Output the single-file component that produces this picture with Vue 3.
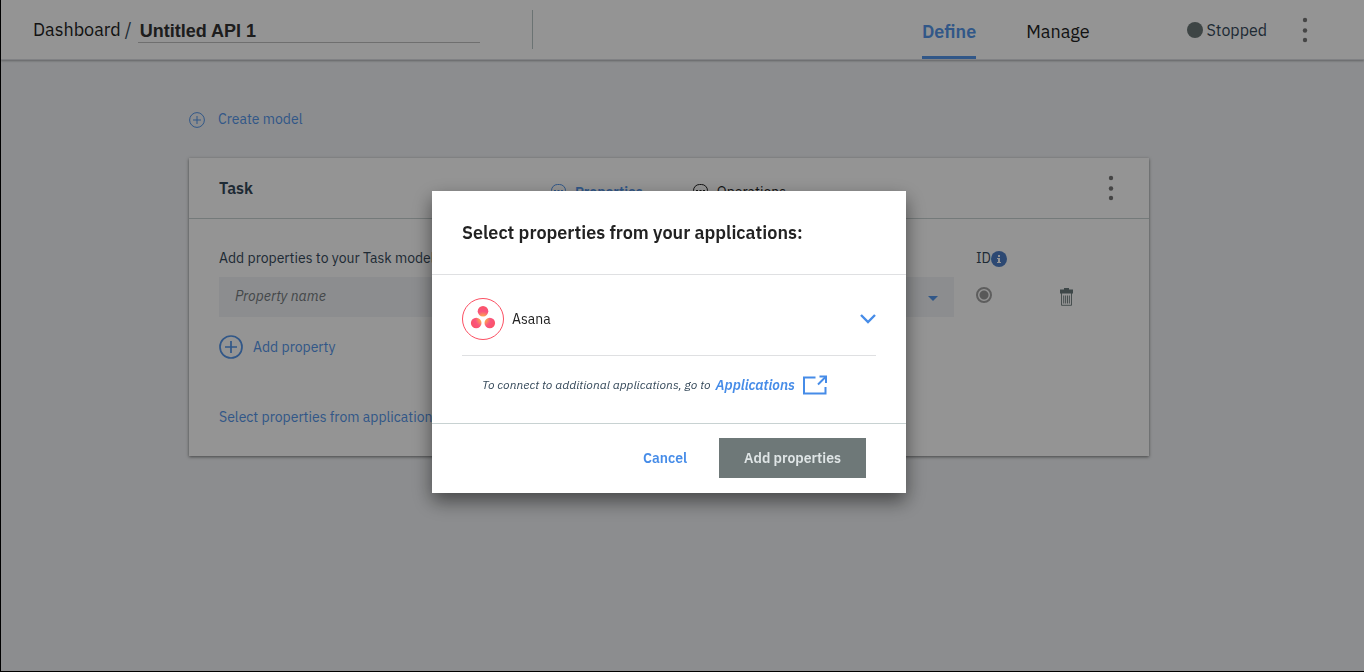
<script setup>
import { ref } from 'vue'

const apiName = ref('Untitled API 1')
const propertyName = ref('')
const propertyType = ref('string')
const tabs = [
  { label: 'Define', active: true },
  { label: 'Manage', active: false },
]
const sections = [
  { label: 'Properties', active: true },
  { label: 'Operations', active: false },
]
</script>

<template>
  <div class="app">
    <header class="topbar">
      <nav class="crumbs" aria-label="Breadcrumb">
        <a href="#" class="crumb">Dashboard</a>
        <span class="slash">/</span>
        <input v-model="apiName" class="api-name" aria-label="API name" />
      </nav>
      <nav class="tabs" aria-label="API sections">
        <a v-for="t in tabs" :key="t.label" href="#" class="tab" :class="{ active: t.active }">{{ t.label }}</a>
      </nav>
      <div class="status"><span class="dot"></span>Stopped</div>
      <button class="kebab" aria-label="API options">
        <svg width="6" height="26" viewBox="0 0 6 26"><circle cx="3" cy="3" r="2.2" /><circle cx="3" cy="13.500" r="2.2" /><circle cx="3" cy="23" r="2.2" /></svg>
      </button>
    </header>

    <main class="content">
      <button class="link create">
        <svg width="16" height="18" viewBox="0 0 16 18"><circle cx="8" cy="10" r="7.400" /><path d="M8 6v8M4 10h8" /></svg>
        Create model
      </button>

      <section class="card">
        <div class="card-head">
          <h2>Task</h2>
          <div class="sections">
            <button v-for="s in sections" :key="s.label" class="section" :class="{ active: s.active }">
              <svg width="15" height="17" viewBox="0 0 15 17"><rect x=".5" y=".5" width="14" height="14" rx="6" /><path d="M3 7.500h2M6.500 7.500h2M10 7.500h2" stroke-width="3" /></svg>
              {{ s.label }}
            </button>
          </div>
          <button class="kebab" aria-label="Model options">
            <svg width="6" height="26" viewBox="0 0 6 26"><circle cx="3" cy="3" r="2.2" /><circle cx="3" cy="13.500" r="2.2" /><circle cx="3" cy="23" r="2.2" /></svg>
          </button>
        </div>
        <div class="card-body">
          <div class="grid">
            <label for="prop-name" class="grid-label">Add properties to your Task model</label>
            <div class="id-label">
              <label for="prop-id">ID</label>
              <svg width="16" height="18" viewBox="0 0 16 18"><circle cx="8" cy="10" r="8" fill="#4f7fc6" /><path d="M7 6h2v2H7zM6 9h3v4h1v1H6v-1h1v-3H6z" fill="#fff" /></svg>
            </div>
            <span></span>
            <div class="fields">
              <input id="prop-name" v-model="propertyName" class="field" placeholder="Property name" />
              <div class="select-wrap">
                <select v-model="propertyType" class="field" aria-label="Property type">
                  <option value="string">String</option>
                </select>
                <svg class="caret" width="10" height="5" viewBox="0 0 10 5"><path d="M0 0h10L5 5z" /></svg>
              </div>
            </div>
            <input id="prop-id" type="radio" class="radio" checked />
            <button class="trash" aria-label="Delete property">
              <svg width="13" height="18" viewBox="0 0 13 18"><path d="M4 0h5v1.500h4V5.500H0v-4h4z" fill="#6b7a7c" /><path d="M1.500 5v12.300h10V5M3.700 7.500v8M5.600 7.500v8M7.500 7.500v8M9.400 7.500v8" fill="none" stroke="#6b7a7c" stroke-width=".9" /></svg>
            </button>
          </div>
          <button class="link add">
            <svg width="24" height="24" viewBox="0 0 24 24"><circle cx="12" cy="12" r="11" /><path d="M12 6v12M6 12h12" /></svg>
            Add property
          </button>
          <button class="link">Select properties from applications</button>
        </div>
      </section>
    </main>

    <div class="overlay">
      <div class="modal" role="dialog" aria-modal="true" aria-labelledby="modal-title">
        <h1 id="modal-title">Select properties from your applications:</h1>
        <div class="modal-body">
          <button class="app-row">
            <svg width="42" height="42" viewBox="0 0 42 42">
              <defs>
                <radialGradient id="petal" gradientUnits="userSpaceOnUse" cx="21" cy="21" r="14">
                  <stop offset="0" stop-color="#ffb43f" />
                  <stop offset=".25" stop-color="#fd9a55" />
                  <stop offset=".55" stop-color="#f9557f" />
                  <stop offset="1" stop-color="#fb5360" />
                </radialGradient>
              </defs>
              <circle cx="21" cy="21" r="20.500" fill="#fff" stroke="#fb4f62" />
              <g fill="url(#petal)"><circle cx="21" cy="13.300" r="5.300" /><circle cx="14.200" cy="25" r="5.300" /><circle cx="27.800" cy="25" r="5.300" /></g>
            </svg>
            <span>Asana</span>
            <svg class="chevron" width="16" height="10" viewBox="0 0 16 10"><path d="M1 1l7 7 7-7" /></svg>
          </button>
          <p class="hint">
            To connect to additional applications, go to
            <a href="#">Applications
              <svg width="24" height="20" viewBox="0 0 24 20"><path d="M12.500 2.500H1v16h21.500V12" /><path d="M15 9.500l7.500-7.500" /><path d="M16.500 1.500H23V8" /></svg>
            </a>
          </p>
        </div>
        <div class="modal-foot">
          <button class="cancel">Cancel</button>
          <button class="submit">Add properties</button>
        </div>
      </div>
    </div>
  </div>
</template>

<style>
body {
  background: #f1f3f6;
}
</style>

<style scoped>
* {
  box-sizing: border-box;
}
.app {
  min-height: 100vh;
  border-left: 1px solid #000;
  border-bottom: 1px solid #000;
  font-family: "IBM Plex Sans", Roboto, "Liberation Sans", sans-serif;
  font-size: 14px;
  line-height: 20px;
  color: #35495a;
}
button {
  border: 0;
  padding: 0;
  background: none;
  font: inherit;
  color: inherit;
  cursor: pointer;
}
a {
  text-decoration: none;
  color: inherit;
}
svg {
  flex: none;
  display: block;
}
.topbar {
  display: flex;
  align-items: center;
  height: 60px;
  padding: 0 56px 0 32px;
  background: #fff;
  border-bottom: 1px solid #dcdfe3;
  box-shadow: 0 1px 2px rgba(0, 0, 0, 0.3);
}
.crumbs {
  display: flex;
  align-items: center;
  gap: 4px;
  height: 39px;
  width: 500px;
  border-right: 1px solid #b8c6c6;
  font-size: 18px;
  color: #222;
}
.slash {
  color: #35495a;
}
.api-name {
  width: 342px;
  height: 26px;
  margin-left: 2px;
  padding: 4px 2px 0;
  border: 0;
  border-bottom: 1px solid #c0c0c0;
  background: none;
  font: bold 18px "Liberation Sans", sans-serif;
  color: #333;
}
.tabs {
  display: flex;
  gap: 50px;
  height: 59px;
  margin-left: auto;
  margin-right: 97px;
  font-size: 18px;
  line-height: 64px;
  color: #222;
}
.tab.active {
  font-weight: 600;
  color: #5596ea;
  border-bottom: 3px solid #5596ea;
}
.status {
  display: flex;
  align-items: center;
  gap: 4px;
  margin-right: 35px;
  font-size: 16px;
}
.dot {
  width: 16px;
  height: 16px;
  border-radius: 50%;
  background: #6b7777;
}
.kebab {
  fill: #777;
}
.content {
  display: flex;
  flex-direction: column;
  align-items: center;
  padding: 49px 27px 40px 0;
}
.link {
  display: flex;
  align-items: center;
  color: #5596ea;
}
.link svg,
.section svg {
  fill: none;
  stroke: currentColor;
}
.create {
  width: 960px;
  max-width: 100%;
  gap: 13px;
}
.card {
  width: 960px;
  max-width: 100%;
  margin-top: 29px;
  background: #fff;
  box-shadow: 0 1px 3px rgba(0, 0, 0, 0.5);
}
.card-head {
  display: flex;
  align-items: center;
  height: 61px;
  padding: 0 35px 0 30px;
  border-bottom: 1px solid #c8d2d2;
}
h2 {
  margin: 0;
  width: 332px;
  font-size: 16px;
  font-weight: 600;
}
.sections {
  display: flex;
  gap: 50px;
  flex: 1;
  padding-top: 8px;
  color: #222;
}
.section {
  display: flex;
  align-items: center;
  gap: 9px;
}
.section.active {
  font-weight: 600;
  color: #5596ea;
}
.card-body {
  padding: 29px 30px;
}
.grid {
  display: grid;
  grid-template-columns: minmax(0, 1fr) 62px 59px;
  column-gap: 22px;
  row-gap: 9px;
}
.id-label {
  display: flex;
  align-items: center;
}
.fields {
  display: grid;
  grid-template-columns: 1fr 1fr;
  gap: 16px;
}
.field {
  width: 100%;
  height: 40px;
  padding: 0 16px 2px;
  border: 0;
  border-radius: 0;
  appearance: none;
  background: #f1f3f6;
  font: inherit;
  color: #35495a;
}
.field::placeholder {
  font-style: italic;
  color: #757b80;
  opacity: 1;
}
.select-wrap {
  position: relative;
}
.caret {
  position: absolute;
  right: 16px;
  top: 19px;
  fill: #5596ea;
}
.radio {
  appearance: none;
  width: 16px;
  height: 16px;
  margin: 10px 0 0;
  border: 2px solid #a2a2a2;
  border-radius: 50%;
  background: radial-gradient(circle, #999 4px, transparent 5px);
}
.trash {
  justify-self: start;
}
.add {
  gap: 10px;
  margin: 18px 0 48px;
}
.add svg {
  stroke-width: 1.700;
}
.overlay {
  position: fixed;
  inset: 0 0 1px 1px;
  display: flex;
  align-items: center;
  justify-content: center;
  padding: 13px 27px 0 0;
  background: rgba(0, 0, 0, 0.42);
}
.modal {
  width: 474px;
  max-width: 100%;
  background: #fff;
  box-shadow: 0 8px 18px rgba(0, 0, 0, 0.5);
}
h1 {
  margin: 0;
  padding: 30px 30px 29px;
  border-bottom: 1px solid #dfe0e2;
  font-size: 18px;
  line-height: 24px;
  font-weight: 600;
  color: #222;
}
.modal-body {
  padding: 0 30px;
}
.app-row {
  display: flex;
  align-items: center;
  gap: 8px;
  width: 100%;
  height: 81px;
  padding-top: 8px;
  border-bottom: 1px solid #dfe0e2;
  color: #222;
}
.chevron {
  margin-left: auto;
  fill: none;
  stroke: #468ce8;
  stroke-width: 2.4;
}
.hint {
  display: flex;
  align-items: center;
  gap: 5px;
  height: 67px;
  margin: 0;
  padding: 0 20px 9px;
  font-size: 12px;
  font-style: italic;
  white-space: nowrap;
}
.hint a {
  display: flex;
  align-items: center;
  gap: 8px;
  font-size: 14px;
  font-weight: 600;
  color: #468ce8;
}
.hint svg {
  fill: none;
  stroke: #468ce8;
  stroke-width: 2;
}
.modal-foot {
  display: flex;
  justify-content: flex-end;
  gap: 32px;
  padding: 14px 40px 15px;
  border-top: 1px solid #c8d2d2;
  font-weight: 600;
}
.cancel {
  color: #468ce8;
}
.submit {
  height: 40px;
  padding: 0 25px;
  background: #6e7878;
  color: #dfe5e6;
}
</style>
